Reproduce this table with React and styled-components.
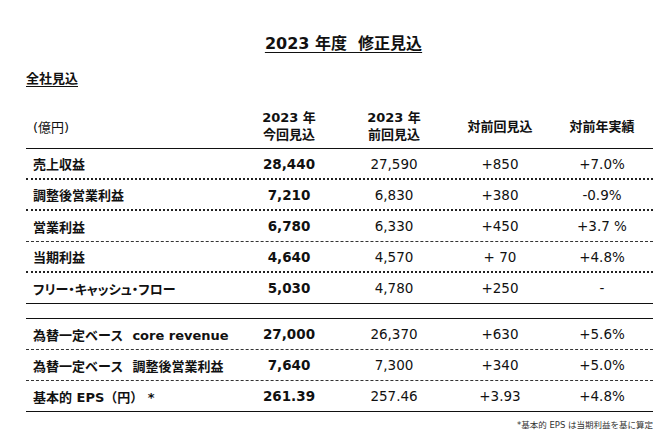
import styled, { createGlobalStyle } from "styled-components";

const GlobalStyle = createGlobalStyle`
  body {
    margin: 0;
    background: #ffffff;
    font-family: "DejaVu Sans", "Noto Sans CJK JP", sans-serif;
    color: #111;
  }
`;

const Page = styled.div`
  width: 671px;
  height: 441px;
  box-sizing: border-box;
  padding: 34px 18px 0 26px;
  overflow: hidden;
`;

const Title = styled.h1`
  margin: 0;
  font-size: 16px;
  line-height: 20px;
  font-weight: bold;
  text-align: center;
  text-decoration: underline;
  text-underline-offset: 3px;
  padding-left: 8px;
  white-space: pre;
`;

const Section = styled.div`
  margin-top: 16px;
  font-size: 13px;
  line-height: 18px;
  font-weight: bold;
  text-decoration: underline;
  text-underline-offset: 3px;
`;

const Grid = styled.div`
  display: grid;
  grid-template-columns: 213px 100px 110px 102px 102px;
  align-items: center;
  box-sizing: border-box;
`;

const HeaderRow = styled(Grid)`
  margin-top: 21px;
  padding-bottom: 5px;
  border-bottom: 1.5px solid #111;
`;

const Unit = styled.div`
  padding-left: 7px;
  font-size: 13px;
`;

const HeadCell = styled.div`
  font-size: 13px;
  line-height: 17px;
  font-weight: bold;
  text-align: center;
`;

const Row = styled(Grid)`
  height: 31px;
  border-bottom: ${(p) =>
    p.line === "solid"
      ? "1.5px solid #111"
      : p.line === "dash"
      ? "1px dashed #333"
      : "2px dotted #222"};
`;

const Spacer = styled.div`
  height: 14px;
  border-bottom: 1.5px solid #111;
`;

const Label = styled.div`
  padding-left: 7px;
  font-size: 13px;
  font-weight: bold;
  white-space: pre;
  font-feature-settings: ${(p) => (p.tight ? '"palt"' : "normal")};
`;

const Value = styled.div`
  text-align: center;
  font-size: 13.5px;
  font-weight: ${(p) => (p.bold ? "bold" : "normal")};
  white-space: pre;
`;

const Note = styled.div`
  margin-top: 6px;
  text-align: right;
  font-size: 8.5px;
  color: #333;
`;

const groupA = [
  { label: "売上収益", v: ["28,440", "27,590", "+850", "+7.0%"], line: "dot" },
  { label: "調整後営業利益", v: ["7,210", "6,830", "+380", "-0.9%"], line: "dot" },
  { label: "営業利益", v: ["6,780", "6,330", "+450", "+3.7 %"], line: "dash" },
  { label: "当期利益", v: ["4,640", "4,570", "+ 70", "+4.8%"], line: "dot" },
  { label: "フリー・キャッシュ・フロー", v: ["5,030", "4,780", "+250", "-"], line: "solid", tight: true },
];

const groupB = [
  { label: "為替一定ベース  core revenue", v: ["27,000", "26,370", "+630", "+5.6%"], line: "dash" },
  { label: "為替一定ベース  調整後営業利益", v: ["7,640", "7,300", "+340", "+5.0%"], line: "dash" },
  { label: "基本的 EPS（円） *", v: ["261.39", "257.46", "+3.93", "+4.8%"], line: "solid" },
];

const renderRow = (r) => (
  <Row key={r.label} line={r.line}>
    <Label tight={r.tight}>{r.label}</Label>
    {r.v.map((x, i) => (
      <Value key={i} bold={i === 0}>
        {x}
      </Value>
    ))}
  </Row>
);

export default function App() {
  return (
    <Page>
      <GlobalStyle />
      <Title>2023 年度  修正見込</Title>
      <Section>全社見込</Section>
      <HeaderRow>
        <Unit>(億円)</Unit>
        <HeadCell>
          2023 年<br />今回見込
        </HeadCell>
        <HeadCell>
          2023 年<br />前回見込
        </HeadCell>
        <HeadCell>対前回見込</HeadCell>
        <HeadCell>対前年実績</HeadCell>
      </HeaderRow>
      {groupA.map(renderRow)}
      <Spacer />
      {groupB.map(renderRow)}
      <Note>*基本的 EPS は当期利益を基に算定</Note>
    </Page>
  );
}
